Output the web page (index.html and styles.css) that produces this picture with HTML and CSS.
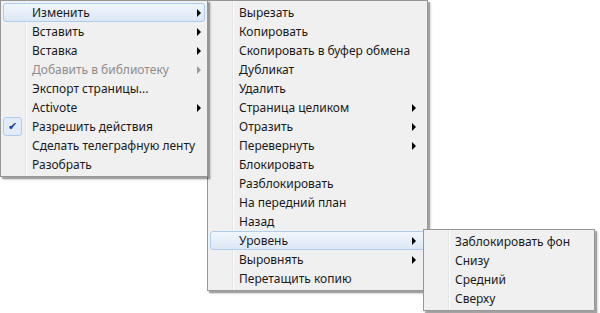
FILE: index.html
```html
<!DOCTYPE html>
<html lang="ru">
<head>
  <meta charset="UTF-8">
  <title>Контекстное меню</title>
  <link rel="stylesheet" href="styles.css">
</head>
<body>
  <div class="canvas">
    <div class="menu menu-main">
      <div class="item active">Изменить<span class="arrow"></span></div>
      <div class="item">Вставить<span class="arrow"></span></div>
      <div class="item">Вставка<span class="arrow"></span></div>
      <div class="item disabled">Добавить в библиотеку<span class="arrow"></span></div>
      <div class="item">Экспорт страницы...</div>
      <div class="item">Activote<span class="arrow"></span></div>
      <div class="item checked"><span class="check">&#10004;</span>Разрешить действия</div>
      <div class="item">Сделать телеграфную ленту</div>
      <div class="item">Разобрать</div>
    </div>

    <div class="menu menu-edit">
      <div class="item">Вырезать</div>
      <div class="item">Копировать</div>
      <div class="item">Скопировать в буфер обмена</div>
      <div class="item">Дубликат</div>
      <div class="item">Удалить</div>
      <div class="item">Страница целиком<span class="arrow"></span></div>
      <div class="item">Отразить<span class="arrow"></span></div>
      <div class="item">Перевернуть<span class="arrow"></span></div>
      <div class="item">Блокировать</div>
      <div class="item">Разблокировать</div>
      <div class="item">На передний план</div>
      <div class="item">Назад</div>
      <div class="item active">Уровень<span class="arrow"></span></div>
      <div class="item">Выровнять<span class="arrow"></span></div>
      <div class="item">Перетащить копию</div>
    </div>

    <div class="menu menu-level">
      <div class="item">Заблокировать фон</div>
      <div class="item">Снизу</div>
      <div class="item">Средний</div>
      <div class="item">Сверху</div>
    </div>
  </div>
</body>
</html>
```

FILE: styles.css
```css
* { box-sizing: border-box; }
html, body {
  margin: 0;
  padding: 0;
}
body {
  background: #fff;
  font-family: "Noto Sans", "Open Sans", Arial, sans-serif;
  font-size: 12px;
  color: #1a1a1a;
}
.canvas {
  position: relative;
  width: 600px;
  height: 313px;
}

/* popup menus overlap each other, so they sit on the canvas */
.menu {
  position: absolute;
  padding: 2px;
  border: 1px solid #979797;
  background: linear-gradient(to right, #f0f0f0 24px, #e2e3e3 24px, #e2e3e3 25px, #fff 25px, #fff 26px, #f0f0f0 26px);
  box-shadow: 2px 2px 1px rgba(0,0,0,0.28), 3px 3px 2px rgba(0,0,0,0.12);
  display: flex;
  flex-direction: column;
}
.menu-main {
  left: 0;
  top: 0;
  width: 208px;
  z-index: 1;
}
.menu-edit {
  left: 207px;
  top: 0;
  width: 221px;
}
.menu-level {
  left: 423px;
  top: 229px;
  width: 172px;
  z-index: 2;
}

.item {
  position: relative;
  display: flex;
  align-items: center;
  height: 19px;
  padding-left: 28px;
  padding-right: 3px;
  border: 1px solid transparent;
  border-radius: 3px;
  white-space: nowrap;
}
.menu-edit .item { padding-right: 8px; }
.item.active {
  border-color: #aeccee;
  background: linear-gradient(to bottom, #f1f6fc, #dce8f6);
}
.item.disabled {
  color: #8d8d8d;
}
.arrow {
  margin-left: auto;
  width: 0;
  height: 0;
  border-left: 4px solid #000;
  border-top: 4px solid transparent;
  border-bottom: 4px solid transparent;
}
.item.disabled .arrow {
  border-left-color: #9a9a9a;
}
.check {
  position: absolute;
  left: -1px;
  top: -1px;
  width: 19px;
  height: 19px;
  display: flex;
  align-items: center;
  justify-content: center;
  border: 1px solid #aeccee;
  border-radius: 3px;
  background: #e2ecf8;
  color: #1c3c8c;
  font-family: "DejaVu Sans", sans-serif;
  font-size: 11px;
}
```
